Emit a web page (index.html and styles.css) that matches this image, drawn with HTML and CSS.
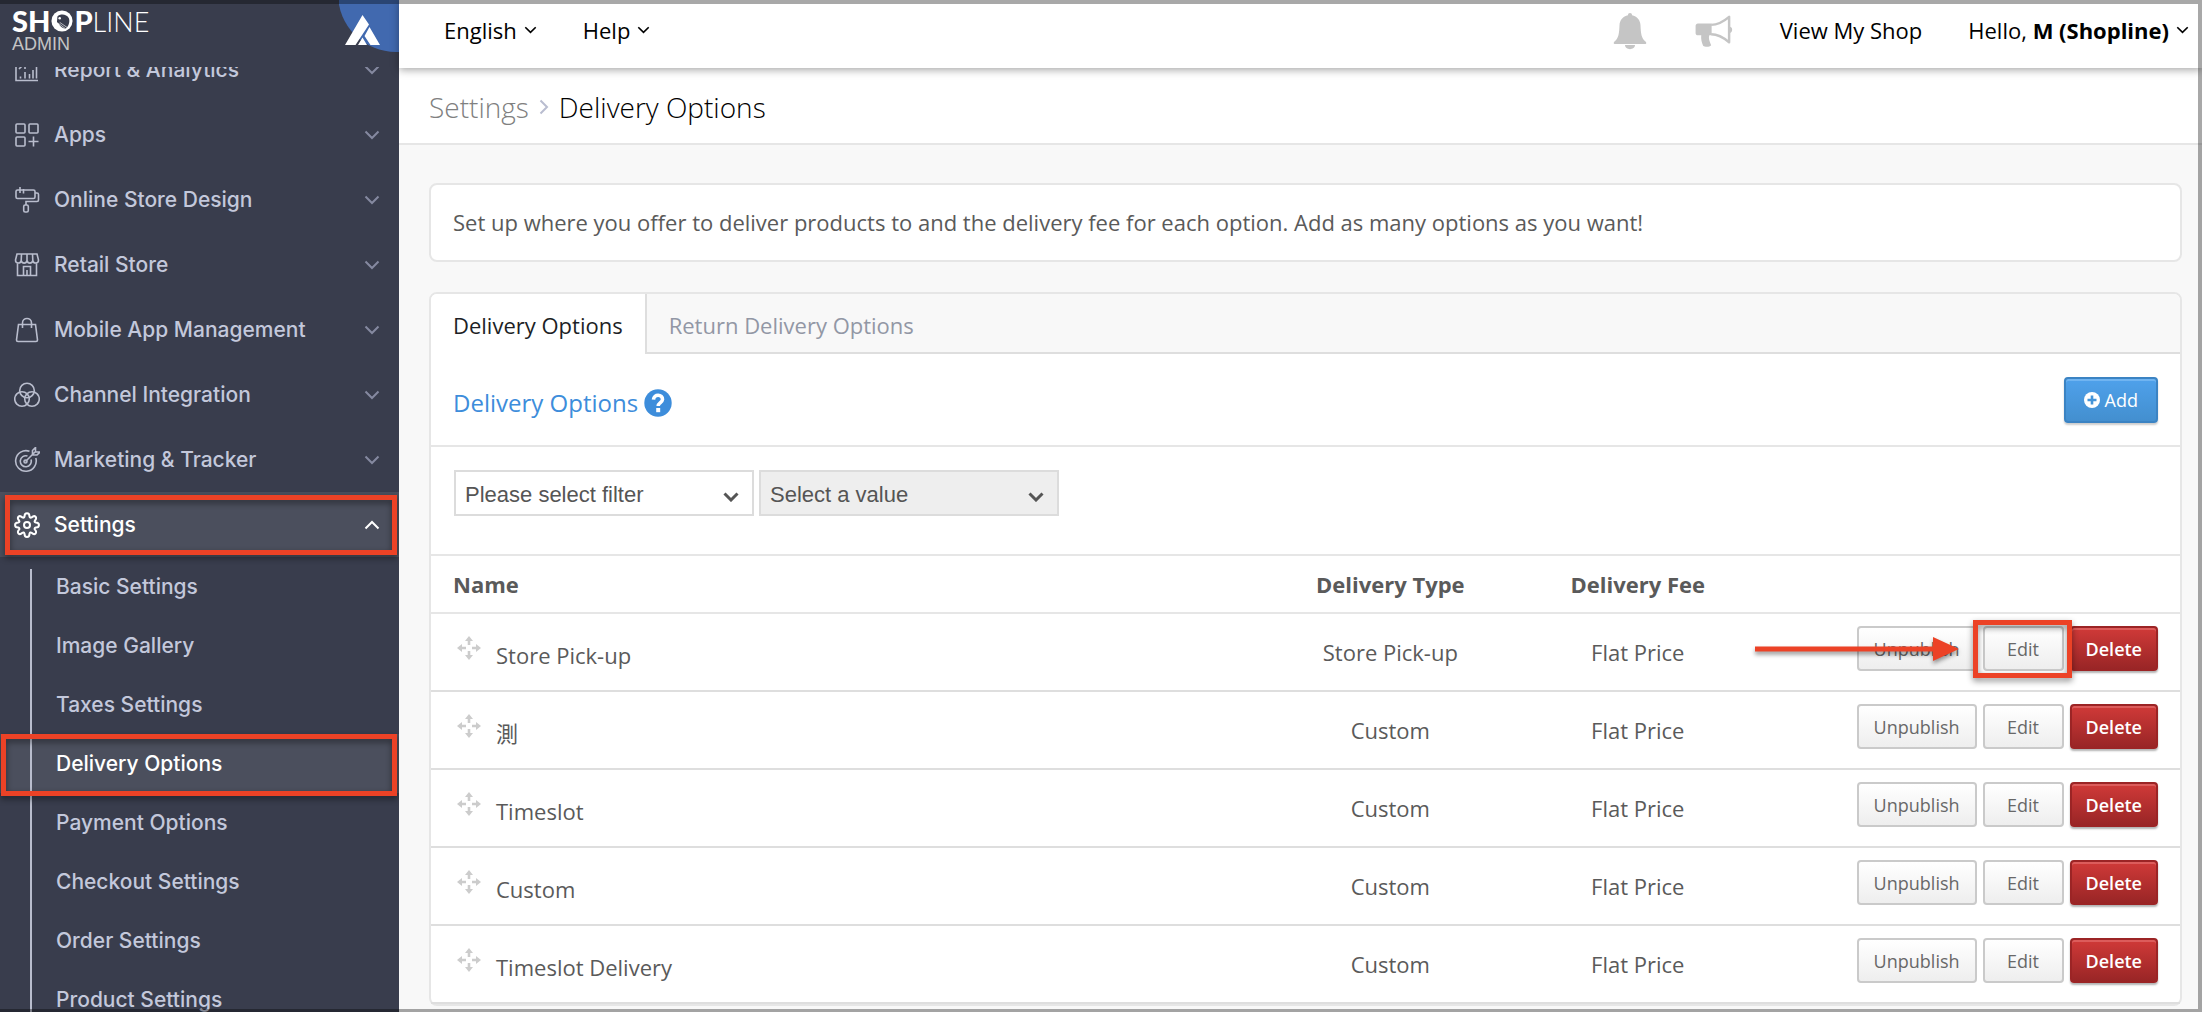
FILE: index.html
```html
<!DOCTYPE html>
<html lang="en">
<head>
  <meta charset="UTF-8" />
  <meta name="viewport" content="width=device-width, initial-scale=1.0"/>
  <title>Delivery Options - SHOPLINE Admin</title>
  <link rel="stylesheet" href="styles.css">
</head>
<body>
  <!-- Shared icons -->
  <svg class="sprite" aria-hidden="true">
    <symbol id="chevron" viewBox="0 0 16 10"><path d="M1.5 1.5 8 8l6.5-6.5"/></symbol>
    <symbol id="move" viewBox="0 0 24 24">
      <path d="M12 0l4 5h-2.700v4h-2.600V5H8zM12 24l4-5h-2.700v-4h-2.600v4H8zM0 12l5-4v2.700h4v2.600H5V16zM24 12l-5-4v2.700h-4v2.600h4V16z"/>
    </symbol>
  </svg>

  <aside class="sidebar">
    <div class="brand">
      <div class="logo">
        <div class="logo-name">
          <b>SH</b>
          <svg class="logo-face" viewBox="0 0 24 24">
            <circle cx="12" cy="12" r="11.500" fill="#fff"/>
            <path d="M7 7C10 4 17 4 19.500 9c1.500 4-.5 9-3.500 11.500-3-.5-6-2.500-7.500-5.500L6.500 13z" fill="#393d4d"/>
            <circle cx="9.500" cy="9" r="1.400" fill="#fff"/>
            <path d="M8 14.500l8 6M9.500 13.500l8 5.500" stroke="#fff" stroke-width=".7"/>
          </svg>
          <b>P</b><span>LINE</span>
        </div>
        <div class="logo-sub">ADMIN</div>
      </div>
      <svg class="badge" viewBox="0 0 60 54">
        <circle cx="57" cy="-6" r="58" fill="#4169af"/>
        <path d="M23.500 15 30 24.500 16.500 45H6zM30.500 27 41 45H31.500L25.500 36zM23.500 37.500l4.500 7.500h-9z" fill="#fff"/>
      </svg>
    </div>

    <nav class="menu">
      <ul class="menu-list">
        <li><a class="menu-item" href="#">
          <svg class="icon" viewBox="0 0 26 26"><path d="M2 3v20.500h22M6.500 19.500v2M11 15v6.500M11 9.500V12M15.500 17v4.500M19 13v8.500M22.500 8v13.500M5 12l6-6 5 3"/></svg>
          Report &amp; Analytics
          <svg class="chevron"><use href="#chevron"/></svg></a></li>
        <li><a class="menu-item" href="#">
          <svg class="icon" viewBox="0 0 26 26"><rect x="2" y="2" width="9" height="9" rx="1"/><rect x="15" y="2" width="9" height="9" rx="1"/><rect x="2" y="15" width="9" height="9" rx="1"/><path d="M19.500 14.500v10M14.500 19.500h10"/></svg>
          Apps
          <svg class="chevron"><use href="#chevron"/></svg></a></li>
        <li><a class="menu-item" href="#">
          <svg class="icon" viewBox="0 0 26 26"><rect x="2" y="3" width="19" height="8.500" rx="1.500"/><path d="M6 0v6M9.500 2v4.500M21 6h2c1 0 1.500.5 1.500 1.500V13c0 1-.5 1.500-1.500 1.500H12V18"/><rect x="9.700" y="18" width="4.600" height="7" rx="1.500"/></svg>
          Online Store Design
          <svg class="chevron"><use href="#chevron"/></svg></a></li>
        <li><a class="menu-item" href="#">
          <svg class="icon" viewBox="0 0 26 26"><path d="M3 2h20l1.500 6c0 4-5 4-5.700.5C18 12 13.700 12 13 8.500 12.300 12 8 12 7.200 8.500 6.500 12 1.500 12 1.500 8zM7.200 8.500 7.500 2M13 8.500V2M18.800 8.500 18.500 2M3.500 11.500v12h19v-12M9.500 23.500v-9h7v9M13 18v5"/></svg>
          Retail Store
          <svg class="chevron"><use href="#chevron"/></svg></a></li>
        <li><a class="menu-item" href="#">
          <svg class="icon" viewBox="0 0 26 26"><path d="M4.500 7.500h17l2 15.500c0 1-.5 1.500-1.500 1.500H4c-1 0-1.500-.5-1.500-1.500zM8.500 11V6c0-6 9-6 9 0v5"/></svg>
          Mobile App Management
          <svg class="chevron"><use href="#chevron"/></svg></a></li>
        <li><a class="menu-item" href="#">
          <svg class="icon" viewBox="0 0 26 26"><circle cx="13" cy="8.500" r="7.300"/><circle cx="8" cy="17" r="7.300"/><circle cx="18" cy="17" r="7.300"/></svg>
          Channel Integration
          <svg class="chevron"><use href="#chevron"/></svg></a></li>
        <li><a class="menu-item" href="#">
          <svg class="icon" viewBox="0 0 26 26"><path d="M15.500 4.300A10.300 10.300 0 1 0 21.800 11M13.500 9A5.500 5.500 0 1 0 17 12.500M11.500 14.500 21 5M18.500 7.500v-4L21.500.5V5H26l-3 3h-4.500"/><circle cx="11.500" cy="14.500" r="1.500"/></svg>
          Marketing &amp; Tracker
          <svg class="chevron"><use href="#chevron"/></svg></a></li>
        <li><a class="menu-item open marked" href="#">
          <svg class="icon" viewBox="0 0 26 26"><circle cx="13" cy="13" r="3"/><path d="M10.500 4.500C10.500 0 15.500 0 15.500 4.500c.3 1.200 1.200 1.500 2.100.9 3.200-3 6.300.2 3.300 3.100-.7.900-.3 1.700.9 2 4.200 0 4.200 5 0 5-1.200.3-1.600 1.200-.9 2.100 3 3-.2 6.200-3.300 3.200-.9-.7-1.800-.3-2.100.9 0 4.300-5 4.300-5 0-.3-1.200-1.200-1.600-2.100-.9-3.100 3-6.300-.2-3.300-3.200.7-.9.300-1.800-.9-2.100-4.200 0-4.200-5 0-5 1.200-.3 1.600-1.100.9-2-3-2.900.1-6.100 3.300-3.100.9.600 1.800.3 2.100-.9z"/></svg>
          Settings
          <svg class="chevron"><use href="#chevron"/></svg></a>
          <ul class="submenu">
            <li><a href="#">Basic Settings</a></li>
            <li><a href="#">Image Gallery</a></li>
            <li><a href="#">Taxes Settings</a></li>
            <li><a class="current marked" href="#">Delivery Options</a></li>
            <li><a href="#">Payment Options</a></li>
            <li><a href="#">Checkout Settings</a></li>
            <li><a href="#">Order Settings</a></li>
            <li><a href="#">Product Settings</a></li>
          </ul>
        </li>
      </ul>
    </nav>
  </aside>

  <main class="main">
    <header class="topbar">
      <button class="top-menu" type="button">English <svg class="caret"><use href="#chevron"/></svg></button>
      <button class="top-menu" type="button">Help <svg class="caret"><use href="#chevron"/></svg></button>
      <div class="top-right">
        <button class="top-icon" type="button" aria-label="Notifications">
          <svg width="34" height="38" viewBox="0 0 34 38"><path d="M17 1c1.300 0 2 .8 2 2.200 5 1 8.300 4.800 8.500 10 .3 8 .8 13 5 16.300 1.200 1 1 2.500-.5 2.500H2c-1.500 0-1.700-1.500-.5-2.500 4.200-3.300 4.700-8.300 5-16.300.2-5.200 3.500-9 8.500-10C15 1.800 15.700 1 17 1zM12 33h10c0 5.500-10 5.500-10 0z" fill="#c5c5c5"/></svg>
        </button>
        <button class="top-icon" type="button" aria-label="Announcements">
          <svg width="38" height="34" viewBox="0 0 40 36"><path d="M3 10h14.500v12.500H15c-1 3 0 6 2 10.500-2 2.500-7 2-8.500.5-1.500-3-2.500-7-2-11H3c-1.500 0-2.500-1-2.500-2.500V12.500C.5 11 1.500 10 3 10zM37 13.500c3 .5 3 6 0 6.500z" fill="#c5c5c5"/><path d="M17 11.500c7 0 12-2.500 19-8.500v27c-7-6-12-8.500-19-8.500" fill="none" stroke="#c5c5c5" stroke-width="2.600" stroke-linejoin="round"/></svg>
        </button>
        <a class="shop-link" href="#">View My Shop</a>
        <button class="top-menu" type="button"><span>Hello, <b>M (Shopline)</b></span> <svg class="caret"><use href="#chevron"/></svg></button>
      </div>
    </header>

    <div class="breadcrumb">
      <a href="#">Settings</a>
      <svg width="10" height="16" viewBox="0 0 10 16"><path d="M1.500 1.500 8 8l-6.500 6.500" fill="none" stroke="#b9bdd0" stroke-width="2"/></svg>
      <h1>Delivery Options</h1>
    </div>

    <div class="content">
      <p class="card intro">Set up where you offer to deliver products to and the delivery fee for each option. Add as many options as you want!</p>

      <section class="card">
        <div class="tabs">
          <a class="tab active" href="#">Delivery Options</a>
          <a class="tab" href="#">Return Delivery Options</a>
        </div>

        <div class="card-head">
          <div class="card-title">
            <h2>Delivery Options</h2>
            <svg class="help" viewBox="0 0 28 28"><circle cx="14" cy="14" r="13.700" fill="#3d8ddb"/><path d="M9.500 10.700C9.800 4.500 18.800 5 18.500 10.500c-.2 3-4.300 3.200-4.300 6.500" fill="none" stroke="#fff" stroke-width="3.600"/><path d="M12.200 19h4v4.200h-4z" fill="#fff"/></svg>
          </div>
          <button class="btn btn-primary" type="button">
            <svg width="16" height="16" viewBox="0 0 16 16"><circle cx="8" cy="8" r="8" fill="#fff"/><path d="M8 3.500v9M3.500 8h9" stroke="#4494d8" stroke-width="2.600"/></svg>
            Add
          </button>
        </div>

        <div class="filters">
          <div class="select">
            <select aria-label="Filter"><option>Please select filter</option></select>
            <svg><use href="#chevron"/></svg>
          </div>
          <div class="select">
            <select aria-label="Value" disabled><option>Select a value</option></select>
            <svg><use href="#chevron"/></svg>
          </div>
        </div>

        <table class="options">
          <thead>
            <tr><th class="col-name">Name</th><th class="col-type">Delivery Type</th><th class="col-fee">Delivery Fee</th><th></th></tr>
          </thead>
          <tbody>
            <tr>
              <td><div class="name"><svg><use href="#move"/></svg><span>Store Pick-up</span></div></td>
              <td>Store Pick-up</td>
              <td>Flat Price</td>
              <td><div class="actions">
                <button class="btn" type="button">Unpublish</button>
                <span class="marked"><button class="btn" type="button">Edit</button>
                  <svg class="arrow" viewBox="0 0 204 26"><path d="M0 10.500h178V1l26 12-26 12v-9.500H0z" fill="#ec4226"/></svg>
                </span>
                <button class="btn btn-danger" type="button">Delete</button>
              </div></td>
            </tr>
            <tr>
              <td><div class="name"><svg><use href="#move"/></svg><span lang="zh-Hant">測</span></div></td>
              <td>Custom</td>
              <td>Flat Price</td>
              <td><div class="actions">
                <button class="btn" type="button">Unpublish</button>
                <button class="btn" type="button">Edit</button>
                <button class="btn btn-danger" type="button">Delete</button>
              </div></td>
            </tr>
            <tr>
              <td><div class="name"><svg><use href="#move"/></svg><span>Timeslot</span></div></td>
              <td>Custom</td>
              <td>Flat Price</td>
              <td><div class="actions">
                <button class="btn" type="button">Unpublish</button>
                <button class="btn" type="button">Edit</button>
                <button class="btn btn-danger" type="button">Delete</button>
              </div></td>
            </tr>
            <tr>
              <td><div class="name"><svg><use href="#move"/></svg><span>Custom</span></div></td>
              <td>Custom</td>
              <td>Flat Price</td>
              <td><div class="actions">
                <button class="btn" type="button">Unpublish</button>
                <button class="btn" type="button">Edit</button>
                <button class="btn btn-danger" type="button">Delete</button>
              </div></td>
            </tr>
            <tr>
              <td><div class="name"><svg><use href="#move"/></svg><span>Timeslot Delivery</span></div></td>
              <td>Custom</td>
              <td>Flat Price</td>
              <td><div class="actions">
                <button class="btn" type="button">Unpublish</button>
                <button class="btn" type="button">Edit</button>
                <button class="btn btn-danger" type="button">Delete</button>
              </div></td>
            </tr>
          </tbody>
        </table>
      </section>
    </div>
  </main>

  <div class="frame"></div>
</body>
</html>
```

FILE: styles.css
```css
:root {
  --side: #393d4d;
  --side-active: #4b4f5d;
  --side-text: #c3c8db;
  --line: #e6e6e6;
  --text: #5a5a5a;
  --mark: #ec4226;
}

* {
  box-sizing: border-box;
}

body {
  margin: 0;
  height: 100vh;
  display: flex;
  overflow: hidden;
  background: #f8f8f8;
  color: var(--text);
  font: 22px/30px "Open Sans", "Noto Sans CJK TC", sans-serif;
}

a {
  color: inherit;
  text-decoration: none;
}

button {
  font: inherit;
  cursor: pointer;
}

ul {
  list-style: none;
  margin: 0;
  padding: 0;
}

.sprite {
  position: absolute;
  width: 0;
  height: 0;
}

/* Sidebar */
.sidebar {
  flex: 0 0 399px;
  display: flex;
  flex-direction: column;
  background: var(--side);
  color: var(--side-text);
  font-family: Inter, sans-serif;
  font-size: 21px;
  font-weight: 500;
}

.brand {
  flex: 0 0 67px;
  display: flex;
  justify-content: space-between;
  padding-left: 12px;
}

.logo-name {
  display: flex;
  align-items: baseline;
  height: 34px;
  margin-top: 2px;
  color: #fff;
  font: 300 27px/38px Lato, sans-serif;
}

.logo-name b {
  font-size: 29px;
  font-weight: 900;
}

.logo-face {
  width: 22px;
  height: 22px;
  margin: 0 1px;
}

.logo-sub {
  color: #c4c4c4;
  font: 18px/16px "Liberation Sans", sans-serif;
}

.badge {
  width: 60px;
  height: 54px;
}

.menu {
  flex: 1;
  overflow: hidden;
}

/* the list is scrolled a little under the brand */
.menu-list {
  margin-top: -30px;
}

.menu-item {
  display: flex;
  align-items: center;
  gap: 14px;
  height: 65px;
  padding: 0 19px 0 14px;
}

.icon {
  width: 26px;
  height: 26px;
  fill: none;
  stroke: #b9bdcd;
  stroke-width: 1.6;
}

.chevron {
  width: 16px;
  height: 10px;
  margin-left: auto;
  fill: none;
  stroke: #8589a0;
  stroke-width: 2;
}

.menu-item.open {
  background: var(--side-active);
  color: #fff;
}

.open .icon {
  stroke: #fff;
  stroke-width: 2;
}

.open .chevron {
  stroke: #fff;
  transform: rotate(180deg);
}

.submenu {
  position: relative;
}

.submenu::before {
  content: "";
  position: absolute;
  z-index: 1;
  top: 12px;
  bottom: 0;
  left: 30px;
  width: 2px;
  background: #b9bdcd;
}

.submenu a {
  display: block;
  padding-left: 56px;
  line-height: 59px;
}

.submenu .current {
  background: var(--side-active);
  color: #fff;
}

/* Red call-outs */
.marked {
  position: relative;
}

.marked::after {
  content: "";
  position: absolute;
  z-index: 2;
  inset: 3px 2px 2px 5px;
  border: 5px solid var(--mark);
  filter: drop-shadow(0 3px 3px rgba(0, 0, 0, 0.45));
  pointer-events: none;
}

.submenu .marked::after {
  inset: 0 2px -3px 1px;
}

.actions .marked::after {
  inset: -6px -8px -7px -10px;
}

.arrow {
  position: absolute;
  z-index: 2;
  top: 10px;
  right: 105px;
  width: 204px;
  height: 26px;
  overflow: visible;
  filter: drop-shadow(0 3px 2px rgba(0, 0, 0, 0.4));
  pointer-events: none;
}

/* Top bar */
.main {
  flex: 1;
  min-width: 0;
  display: flex;
  flex-direction: column;
}

.topbar {
  z-index: 1;
  flex: 0 0 68px;
  display: flex;
  align-items: center;
  gap: 46px;
  padding: 0 13px 8px 45px;
  background: #fff;
  color: #000;
  box-shadow: 0 2px 8px rgba(0, 0, 0, 0.35);
}

.top-menu, .top-icon {
  display: flex;
  align-items: center;
  gap: 7px;
  padding: 0;
  border: none;
  background: none;
  color: inherit;
}

.top-icon {
  padding: 2px 1px 0;
}

.caret {
  width: 13px;
  height: 8px;
  fill: none;
  stroke: #000;
  stroke-width: 2;
}

.top-right {
  display: flex;
  align-items: center;
  gap: 46px;
  margin-left: auto;
}

.breadcrumb {
  flex: 0 0 77px;
  display: flex;
  align-items: center;
  gap: 10px;
  padding: 3px 30px 0;
  background: #fff;
  border-bottom: 2px solid var(--line);
  color: #808080;
  font-size: 28px;
  font-weight: 300;
}

h1, h2 {
  margin: 0;
  font: inherit;
}

.breadcrumb h1 {
  color: #000;
}

/* Content */
.content {
  padding: 38px 20px 0 30px;
}

.card {
  margin: 0 0 30px;
  background: #fff;
  border: 2px solid var(--line);
  border-radius: 8px;
}

.intro {
  padding: 22px 22px 23px;
}

.tabs {
  display: flex;
  height: 60px;
  background: #f8f8f8;
  border-bottom: 2px solid #dedede;
  border-radius: 6px 6px 0 0;
}

.tab {
  padding: 0 22px;
  color: #9297a5;
  line-height: 62px;
}

.tab.active {
  height: 60px;
  background: #fff;
  border-right: 2px solid #dedede;
  border-radius: 6px 0 0 0;
  color: #1d1f26;
}

.card-head {
  display: flex;
  align-items: center;
  justify-content: space-between;
  height: 93px;
  padding: 0 22px;
  border-bottom: 2px solid var(--line);
}

.card-title {
  display: flex;
  align-items: center;
  gap: 6px;
  padding-top: 6px;
  color: #3d8ddb;
  font-size: 24px;
}

.help {
  width: 28px;
  height: 28px;
}

.btn {
  min-width: 81px;
  height: 45px;
  padding: 0 15px;
  background: linear-gradient(#fff, #eee);
  border: 2px solid #cacaca;
  border-radius: 4px;
  color: #686868;
  font-size: 18px;
  line-height: 26px;
}

.btn-primary {
  display: flex;
  align-items: center;
  gap: 5px;
  height: 46px;
  padding: 0 18px;
  background: linear-gradient(#4fa1eb, #438fcf);
  border-color: #3b83c3;
  box-shadow: inset 0 2px #70b4f1, 0 2px 2px rgba(0, 0, 0, 0.2);
  color: #fff;
}

.btn-danger {
  padding: 0 14px;
  background: linear-gradient(#d03a38, #992526);
  border-color: #9b2425;
  box-shadow: inset 0 2px #dc5c5b, 0 2px 2px rgba(0, 0, 0, 0.3);
  color: #fff;
  font-weight: 600;
}

.filters {
  display: flex;
  gap: 5px;
  padding: 23px 23px 38px;
}

.select {
  position: relative;
  width: 300px;
}

.select select {
  appearance: none;
  display: block;
  width: 100%;
  height: 46px;
  padding: 3px 9px 0;
  background: #fff;
  border: 2px solid #dcdcdc;
  border-radius: 0;
  color: #555;
  font: 22px/30px "Liberation Sans", sans-serif;
  opacity: 1;
}

.select select:disabled {
  background: #eee;
}

.select svg {
  position: absolute;
  top: 22px;
  right: 15px;
  width: 16px;
  height: 10px;
  fill: none;
  stroke: #555;
  stroke-width: 3;
  pointer-events: none;
}

/* Options table */
.options {
  width: 100%;
  table-layout: fixed;
  border-collapse: separate;
  border-spacing: 0;
  text-align: center;
}

.col-name {
  width: 47.7%;
  text-align: left;
}

.col-type {
  width: 14.3%;
}

.col-fee {
  width: 14%;
}

.options th {
  height: 60px;
  padding: 0 22px;
  border: solid var(--line);
  border-width: 2px 0;
}

.options td {
  height: 78px;
  padding: 0;
  border-bottom: 2px solid #dedede;
}

.name {
  display: flex;
  gap: 15px;
  height: 76px;
  padding: 22px 26px 0;
}

.name span {
  padding-top: 4px;
}

.name svg {
  width: 24px;
  height: 24px;
  fill: #ccc;
}

.actions {
  display: flex;
  justify-content: flex-end;
  gap: 6px;
  height: 76px;
  padding: 12px 22px 0;
}

.actions .marked {
  height: 45px;
}

.actions .btn {
  display: block;
}

/* grey window edge */
.frame {
  position: fixed;
  z-index: 10;
  inset: 0;
  border: solid rgba(0, 0, 0, 0.34);
  border-width: 4px 4px 3px 0;
  pointer-events: none;
}
```
